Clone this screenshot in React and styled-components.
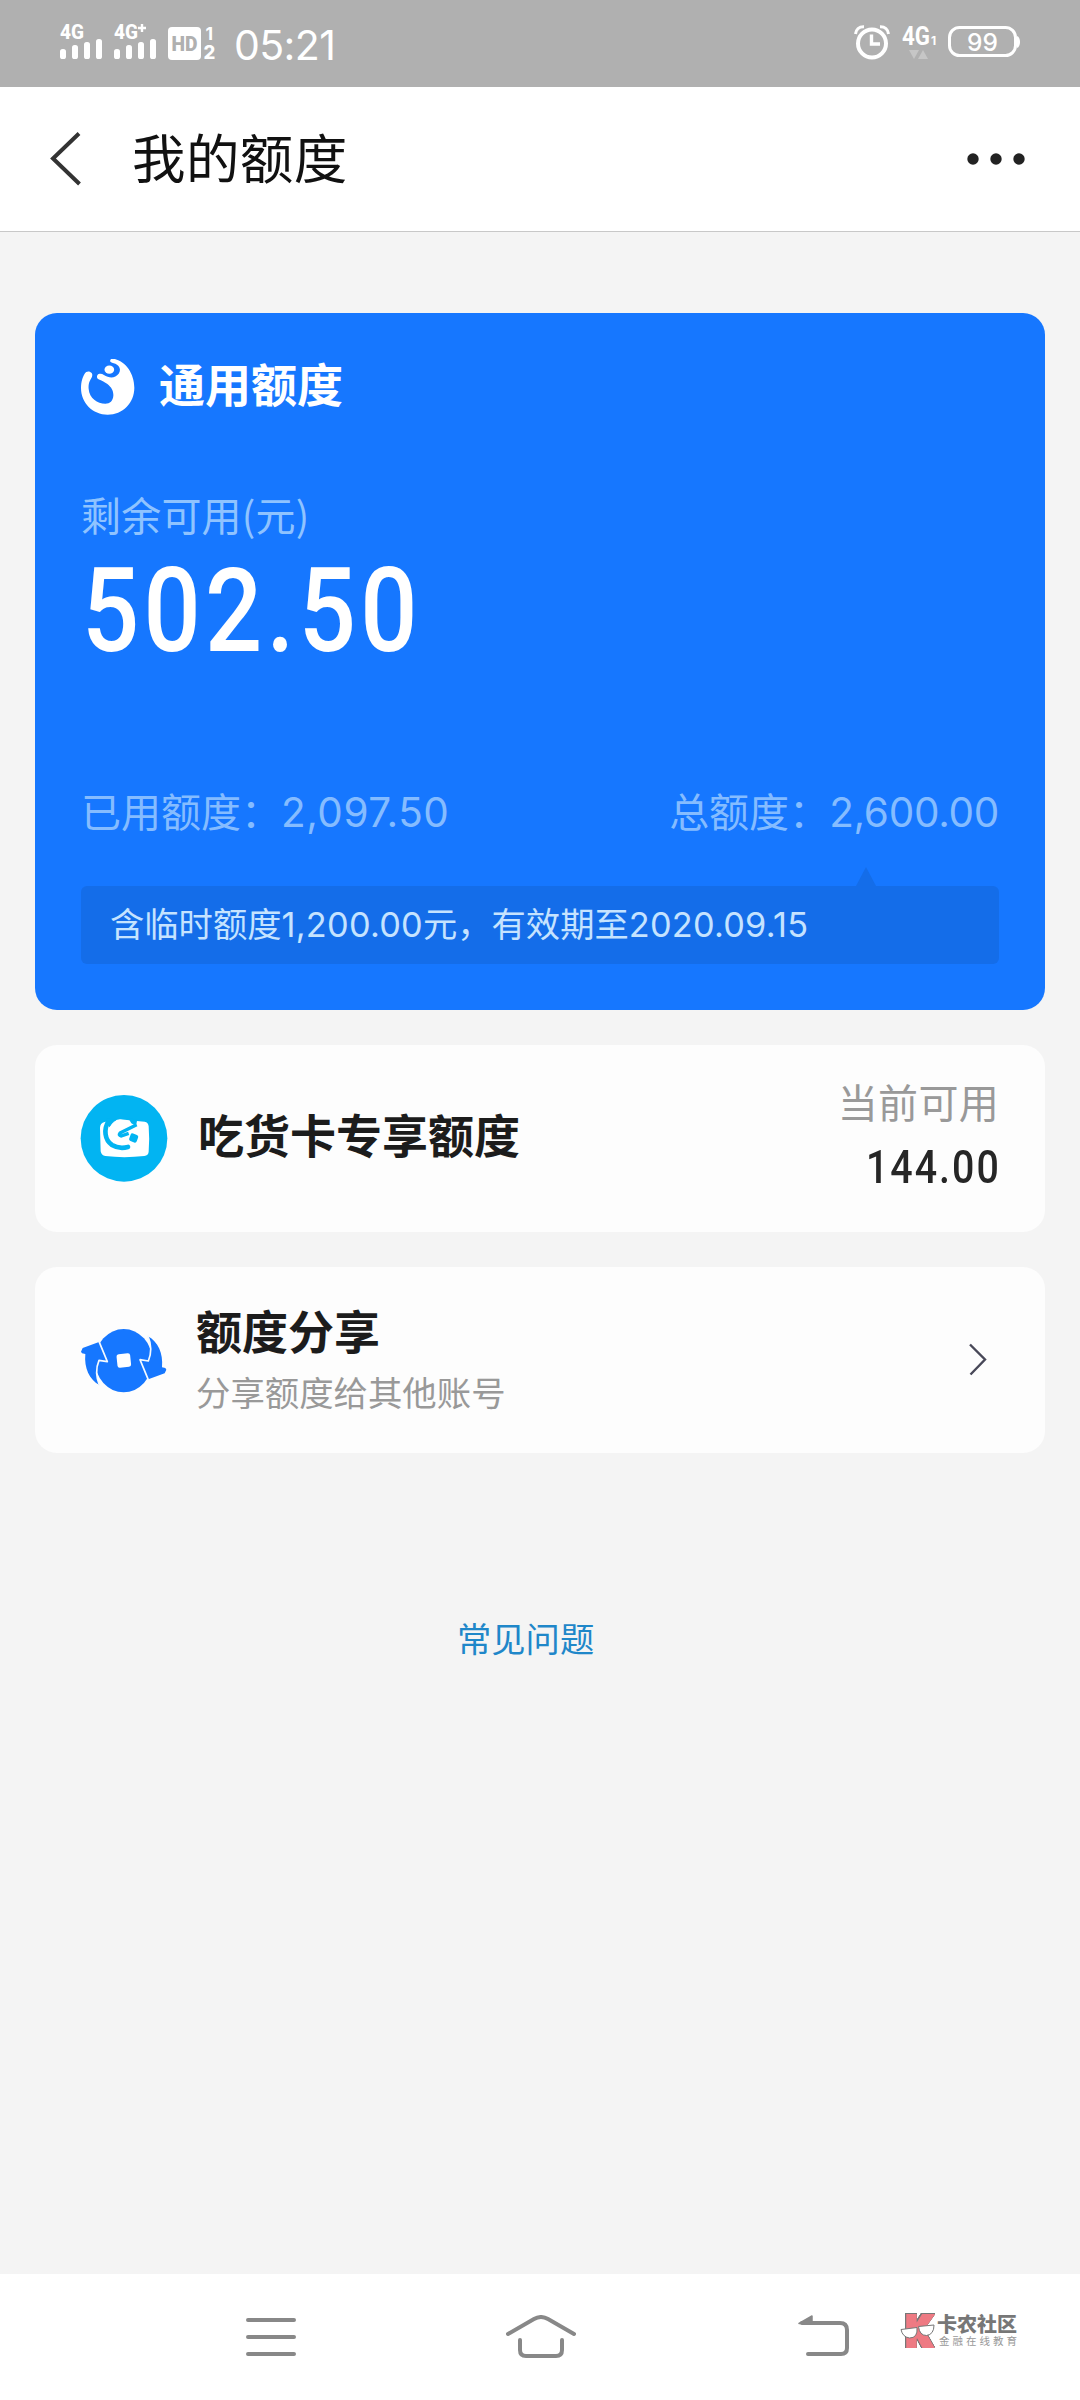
import React from "react";
import styled, { createGlobalStyle } from "styled-components";

const CJK = '"Noto Sans CJK SC", sans-serif';

const GlobalStyle = createGlobalStyle`
  * {
    box-sizing: border-box;
  }
  body {
    margin: 0;
    background: #f4f4f4;
    font-family: ${CJK};
  }
  svg {
    display: block;
    flex: none;
  }
`;

const SignalIcon = ({ label, plus }) => (
  <svg width="46" height="40" viewBox="0 0 46 40" fill="#fff">
    <text x="0" y="17" fontFamily="Roboto" fontWeight="800" fontSize="20" textLength="24" lengthAdjust="spacingAndGlyphs">
      {label}
    </text>
    {plus && <path d="M24 6h8M28 2v8" stroke="#fff" strokeWidth="2.4" />}
    <rect x="0" y="27" width="6" height="10" rx="2.6" />
    <rect x="12" y="23" width="6" height="14" rx="2.6" />
    <rect x="24" y="20" width="6" height="17" rx="2.6" />
    <rect x="36" y="17" width="6" height="20" rx="2.6" />
  </svg>
);

const HdIcon = () => (
  <svg width="50" height="40" viewBox="0 0 50 40">
    <rect x="0" y="5" width="33" height="33" rx="4" fill="#fff" />
    <text x="3.5" y="29" fontFamily="Roboto" fontWeight="900" fontSize="21" fill="#b0b0b0" textLength="26" lengthAdjust="spacingAndGlyphs">
      HD
    </text>
    <text x="37.5" y="18" fontFamily="Inter" fontWeight="700" fontSize="17.5" fill="#fff">
      1
    </text>
    <text x="35.5" y="37" fontFamily="Inter" fontWeight="800" fontSize="18.5" fill="#fff">
      2
    </text>
  </svg>
);

const AlarmIcon = () => (
  <svg width="36" height="36" viewBox="0 -0.5 36 36" fill="none" stroke="#fff">
    <circle cx="18" cy="19" r="14" strokeWidth="4" />
    <path d="M17.5 10v9.5h8.5" strokeWidth="3.4" />
    <path d="M1.5 9.5C2 5 5 2 10 2.2M34.5 9.5C34 5 31 2 26 2.2" strokeWidth="3" />
  </svg>
);

const NetworkIcon = () => (
  <svg width="34" height="36" viewBox="0 0 34 36" fill="#fff">
    <text x="0" y="21" fontFamily="Roboto" fontWeight="700" fontSize="25" textLength="28" lengthAdjust="spacingAndGlyphs">
      4G
    </text>
    <text x="29" y="21" fontFamily="Inter" fontWeight="700" fontSize="12">
      1
    </text>
    <path d="M7 26h10l-5 9zM16 35h10l-5-9z" fill="#c6c6c6" />
  </svg>
);

const BatteryIcon = () => (
  <svg width="74" height="32" viewBox="0 0 74 32">
    <rect x="1.5" y="1.5" width="66" height="28" rx="10" fill="none" stroke="#fff" strokeWidth="3" />
    <path d="M69 10c4 1 4 11 0 12z" fill="#fff" />
    <text x="19" y="24.5" fontFamily="Inter" fontWeight="500" fontSize="24.5" fill="#fff" textLength="31">
      99
    </text>
  </svg>
);

const BackIcon = () => (
  <svg width="32" height="54" viewBox="0 0 32 54" fill="none" stroke="#333" strokeWidth="4">
    <path d="M30 1.5L4 26.5L30.5 52" />
  </svg>
);

const MoreIcon = () => (
  <svg width="58" height="14" viewBox="0 0 58 14" fill="#222">
    <circle cx="6" cy="7" r="5.7" />
    <circle cx="29" cy="7" r="5.7" />
    <circle cx="52" cy="7" r="5.7" />
  </svg>
);

const BrandIcon = () => (
  <svg width="55" height="57" viewBox="153 178 165 171" fill="#fff">
    <path d="M250 177C285 183 313 220 313 264C313 310 278 345 233 345C188 345 153 310 153 265C153 245 158 232 164 222C169 213 180 214 185 220C189 226 186 233 182 239C176 249 175 258 176 268C178 296 202 312 226 312C240 312 249 303 250 288C251 270 241 258 226 249C218 244 210 241 204 238C198 233 201 223 209 222C218 221 224 228 233 231C246 236 258 232 266 222C273 212 270 201 261 195C255 191 247 190 242 187C238 182 242 176 250 177Z" />
    <ellipse cx="238" cy="210" rx="14.5" ry="12.5" />
  </svg>
);

const FoodCardIcon = () => (
  <svg width="88" height="88" viewBox="150 165 264 264">
    <circle cx="282" cy="295" r="130" fill="#02b4f2" />
    <path d="M224 246Q210 249 210 264L212 334Q214 346 226 348Q282 355 343 348Q355 346 356 335Q359 295 356 259Q355 247 344 245L312 242L270 238Z" fill="#fff" />
    <path d="M236 243C220 268 224 300 246 315C262 325 278 325 294 321" fill="none" stroke="#02b4f2" strokeWidth="14" strokeLinecap="round" />
    <path d="M228 236L262 238L238 262ZM296 236L322 238L318 258L304 250Z" fill="#02b4f2" />
    <circle cx="272" cy="273" r="34" fill="#fff" />
    <path d="M320 254L270 279Q264 286 274 288L296 280" fill="none" stroke="#02b4f2" strokeWidth="10" strokeLinejoin="round" />
    <rect x="299" y="282" width="24" height="24" rx="6" fill="#02b4f2" transform="rotate(20 311 294)" />
  </svg>
);

const ShareIcon = () => (
  <svg width="88" height="67" viewBox="150 201 264 201">
    <ellipse cx="281" cy="302" rx="86" ry="95" fill="#1677ff" />
    <g id="arrow">
      <path d="M153 275L158 264L207 246L232 304L204 303C197 325 199 352 208 375C178 358 162 325 166 282L156 280Z" fill="#1677ff" />
      <path d="M206 242L232 305L207 301C197 325 198 352 209 378" fill="none" stroke="#f4faff" strokeWidth="5" strokeLinejoin="round" />
    </g>
    <use href="#arrow" transform="rotate(180 281 302)" />
    <rect x="261" y="281" width="41" height="41" rx="7" fill="#fff" transform="rotate(-6 281 302)" />
  </svg>
);

const ChevronIcon = () => (
  <svg width="18" height="34" viewBox="0 0 18 34" fill="none" stroke="#484858" strokeWidth="2.4">
    <path d="M1 1.5L16 16.5L1.5 31.5" />
  </svg>
);

const MenuIcon = () => (
  <svg width="50" height="44" viewBox="0 0 50 44" fill="none" stroke="#888" strokeWidth="4" strokeLinecap="round">
    <path d="M2 5h46M2 22h46M2 39h46" />
  </svg>
);

const HomeIcon = () => (
  <svg width="70" height="44" viewBox="0 0 70 44" fill="none" stroke="#888" strokeWidth="4" strokeLinecap="round">
    <path d="M2 19L28 4Q35 0 42 4L68 19" />
    <path d="M14 25V35Q14 41 20 41H50Q56 41 56 35V25" />
  </svg>
);

const ReturnIcon = () => (
  <svg width="52" height="44" viewBox="0 0 52 44" fill="none" stroke="#888" strokeWidth="4" strokeLinecap="round">
    <path d="M4 8H42Q49 8 49 15V33Q49 39 43 39H10" />
    <path d="M1 8.5L14 1V8.5Z" fill="#888" strokeWidth="1.5" strokeLinejoin="round" />
  </svg>
);

const CommunityIcon = () => (
  <Mark width="36" height="38" viewBox="0 0 36 38">
    <text x="6" y="34" fontFamily="Roboto" fontWeight="900" fontSize="42" fill="#ee7a83" stroke="#ee7a83" strokeWidth="4" textLength="25" lengthAdjust="spacingAndGlyphs">
      K
    </text>
    <path d="M1 17.5L17 15.5Q18 26 9.5 26Q2.5 25 1 17.5ZM18.5 14.5L34 13Q34 22.5 26.5 23.5Q19.5 23.5 18.5 14.5Z" fill="#fff" stroke="#777" strokeWidth="1" />
  </Mark>
);

function App() {
  return (
    <Page>
      <GlobalStyle />
      <StatusBar>
        <StatusGroup>
          <SignalIcon label="4G" />
          <SignalIcon label="4G" plus />
          <HdIcon />
          <Clock>05:21</Clock>
        </StatusGroup>
        <StatusGroup $gap="12px">
          <AlarmIcon />
          <NetworkIcon />
          <BatteryIcon />
        </StatusGroup>
      </StatusBar>

      <Header>
        <BackIcon />
        <Title>我的额度</Title>
        <MoreIcon />
      </Header>

      <Content>
        <QuotaCard>
          <Brand>
            <BrandIcon />
            <BrandName>通用额度</BrandName>
          </Brand>
          <Label>剩余可用(元)</Label>
          <Amount>502.50</Amount>
          <Stats>
            <div>
              已用额度：<Num $spacing="0.5px">2,097.50</Num>
            </div>
            <div>
              总额度：<Num $spacing="-0.3px">2,600.00</Num>
            </div>
          </Stats>
          <Notice>
            含临时额度<NoticeNum>1,200.00</NoticeNum>元，有效期至<NoticeNum>2020.09.15</NoticeNum>
          </Notice>
        </QuotaCard>

        <RowCard $height="187px">
          <FoodCardIcon />
          <RowTitle>吃货卡专享额度</RowTitle>
          <Available>
            <AvailableLabel>当前可用</AvailableLabel>
            <AvailableValue>144.00</AvailableValue>
          </Available>
        </RowCard>

        <RowCard $height="186px">
          <ShareIcon />
          <RowText>
            <ShareTitle>额度分享</ShareTitle>
            <ShareHint>分享额度给其他账号</ShareHint>
          </RowText>
          <Arrow>
            <ChevronIcon />
          </Arrow>
        </RowCard>

        <Faq>常见问题</Faq>
      </Content>

      <NavBar>
        <MenuIcon />
        <HomeIcon />
        <ReturnIcon />
        <Community>
          <CommunityIcon />
          <div>
            <CommunityName>卡农社区</CommunityName>
            <CommunityHint>金融在线教育</CommunityHint>
          </div>
        </Community>
      </NavBar>
    </Page>
  );
}

const Page = styled.div`
  width: 1080px;
  height: 2400px;
  display: flex;
  flex-direction: column;
  background: #f4f4f4;
  overflow: hidden;
  white-space: nowrap;
`;

const StatusBar = styled.div`
  height: 87px;
  padding: 0 58px 3px 60px;
  display: flex;
  justify-content: space-between;
  align-items: center;
  background: #b0b0b0;
`;

const StatusGroup = styled.div`
  display: flex;
  align-items: center;
  gap: ${(props) => props.$gap || "8px"};

  svg {
    overflow: visible;
  }
`;

const Clock = styled.span`
  margin: 5px 0 0 8px;
  font-family: Inter, sans-serif;
  font-size: 41px;
  line-height: 48px;
  letter-spacing: -0.6px;
  color: #fff;
`;

const Header = styled.div`
  height: 145px;
  padding: 0 55px 0 49px;
  display: flex;
  align-items: center;
  background: #fff;
  border-bottom: 1px solid #c8c8c8;
`;

const Title = styled.h1`
  flex: 1;
  margin: -6px 0 0 51px;
  font-size: 53.5px;
  line-height: 70px;
  letter-spacing: 0.4px;
  font-weight: 400;
  color: #111;
`;

const Content = styled.div`
  flex: 1;
  padding: 81px 35px 0;
  display: flex;
  flex-direction: column;
`;

const QuotaCard = styled.div`
  height: 697px;
  padding: 46px;
  border-radius: 22px;
  background: #1677ff;
  display: flex;
  flex-direction: column;
`;

const Brand = styled.div`
  height: 57px;
  display: flex;
  align-items: center;
`;

const BrandName = styled.div`
  margin: -12px 0 0 23px;
  font-size: 46px;
  line-height: 56px;
  font-weight: 700;
  color: #fff;
`;

const Label = styled.div`
  margin-top: 73px;
  font-size: 40px;
  line-height: 50px;
  letter-spacing: 0.2px;
  color: #8fc3ff;
`;

const Amount = styled.div`
  margin: 22px 0 0 1px;
  font-family: Roboto, sans-serif;
  font-weight: 500;
  font-size: 117px;
  line-height: 100px;
  letter-spacing: 5px;
  color: #fff;
  transform: scaleX(0.86);
  transform-origin: 0 0;
`;

const Stats = styled.div`
  margin-top: auto;
  margin-bottom: 48px;
  display: flex;
  justify-content: space-between;
  font-size: 40px;
  line-height: 50px;
  color: #85bcff;
`;

const Num = styled.span`
  font-family: Inter, sans-serif;
  font-size: 40.5px;
  letter-spacing: ${(props) => props.$spacing};
`;

const Notice = styled.div`
  position: relative;
  height: 78px;
  padding-left: 29px;
  border-radius: 6px;
  background: #146de9;
  font-size: 34.3px;
  line-height: 73px;
  color: #c5e3ff;

  &::before {
    content: "";
    position: absolute;
    right: 123px;
    bottom: 100%;
    border: 10px solid transparent;
    border-top: 0;
    border-bottom: 19px solid #146de9;
  }
`;

const NoticeNum = styled.span`
  font-family: Inter, sans-serif;
  letter-spacing: 0.25px;
`;

const RowCard = styled.div`
  height: ${(props) => props.$height};
  margin-top: 35px;
  padding: 0 46px 0 45px;
  border-radius: 22px;
  background: #fdfdfd;
  display: flex;
  align-items: center;
`;

const RowTitle = styled.div`
  margin: -11px 0 0 30px;
  font-size: 46px;
  line-height: 56px;
  font-weight: 700;
  color: #1c1c1c;
`;

const Available = styled.div`
  margin: -8px 0 0 auto;
  display: flex;
  flex-direction: column;
  align-items: flex-end;
`;

const AvailableLabel = styled.div`
  font-size: 40px;
  line-height: 56px;
  letter-spacing: 0.3px;
  color: #999;
`;

const AvailableValue = styled.div`
  margin: 8px -2px 0 0;
  font-family: Roboto, sans-serif;
  font-weight: 500;
  font-size: 46px;
  line-height: 60px;
  letter-spacing: 2.4px;
  color: #262626;
  transform: scaleX(0.855);
  transform-origin: 100% 0;
`;

const RowText = styled.div`
  flex: 1;
  margin: -4px 0 0 28px;
`;

const ShareTitle = styled(RowTitle)`
  margin: 0;
`;

const ShareHint = styled.div`
  margin-top: 9px;
  font-size: 34.4px;
  line-height: 50px;
  color: #999;
`;

const Arrow = styled.div`
  margin-right: 12px;
`;

const Faq = styled.a`
  margin: 159px 0 0 422px;
  font-size: 34.3px;
  line-height: 50px;
  color: #1f87c9;
`;

const NavBar = styled.div`
  height: 126px;
  padding-left: 246px;
  display: flex;
  align-items: center;
  background: #fff;

  > svg:nth-child(2) {
    margin-left: 210px;
  }
  > svg:nth-child(3) {
    margin-left: 222px;
  }
`;

const Community = styled.div`
  margin: -13px 0 0 50px;
  display: flex;
  align-items: center;
`;

const Mark = styled.svg`
  overflow: visible;

  text {
    filter: drop-shadow(0.6px 0 0 #777) drop-shadow(-0.6px 0 0 #777)
      drop-shadow(0 0.6px 0 #777) drop-shadow(0 -0.6px 0 #777);
  }
`;

const CommunityName = styled.div`
  margin-left: 1px;
  font-size: 20px;
  line-height: 20px;
  font-weight: 900;
  color: #777;
`;

const CommunityHint = styled.div`
  margin-left: 3px;
  font-size: 10.5px;
  line-height: 14px;
  letter-spacing: 3px;
  color: #999;
`;

export default App;
